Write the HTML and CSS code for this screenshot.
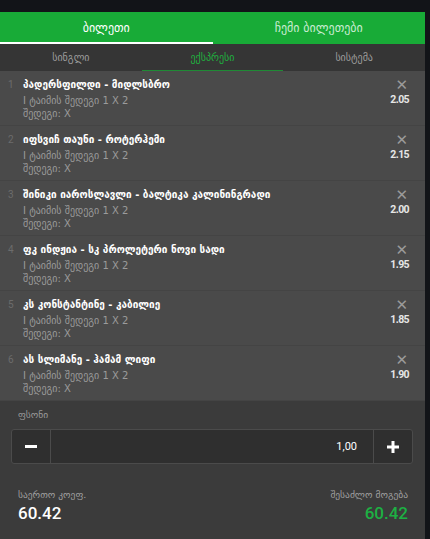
FILE: index.html
```html
<!DOCTYPE html>
<html lang="ka">
<head>
<meta charset="utf-8">
<link rel="stylesheet" href="styles.css">
</head>
<body>
<div class="top"></div>
<div class="wrap">
  <div class="panel">
    <div class="tabs">
      <div class="tab active">ბილეთი</div>
      <div class="tab">ჩემი ბილეთები</div>
    </div>
    <div class="subtabs">
      <div class="sub">სინგლი</div>
      <div class="sub active">ექსპრესი</div>
      <div class="sub">სისტემა</div>
    </div>
    <div class="rows">
      <div class="row">
        <div class="num">1</div>
        <div class="info">
          <div class="title">პადერსფილდი - მიდლსბრო</div>
          <div class="meta">I ტაიმის შედეგი 1 X 2</div>
          <div class="meta">შედეგი: X</div>
        </div>
        <div class="side"><span class="x">✕</span><span class="odd">2.05</span></div>
      </div>
      <div class="row">
        <div class="num">2</div>
        <div class="info">
          <div class="title">იფსვიჩ თაუნი - როტერჰემი</div>
          <div class="meta">I ტაიმის შედეგი 1 X 2</div>
          <div class="meta">შედეგი: X</div>
        </div>
        <div class="side"><span class="x">✕</span><span class="odd">2.15</span></div>
      </div>
      <div class="row">
        <div class="num">3</div>
        <div class="info">
          <div class="title">შინიკი იაროსლავლი - ბალტიკა კალინინგრადი</div>
          <div class="meta">I ტაიმის შედეგი 1 X 2</div>
          <div class="meta">შედეგი: X</div>
        </div>
        <div class="side"><span class="x">✕</span><span class="odd">2.00</span></div>
      </div>
      <div class="row">
        <div class="num">4</div>
        <div class="info">
          <div class="title">ფკ ინდჟია - სკ პროლეტერი ნოვი სადი</div>
          <div class="meta">I ტაიმის შედეგი 1 X 2</div>
          <div class="meta">შედეგი: X</div>
        </div>
        <div class="side"><span class="x">✕</span><span class="odd">1.95</span></div>
      </div>
      <div class="row">
        <div class="num">5</div>
        <div class="info">
          <div class="title">კს კონსტანტინე - კაბილიე</div>
          <div class="meta">I ტაიმის შედეგი 1 X 2</div>
          <div class="meta">შედეგი: X</div>
        </div>
        <div class="side"><span class="x">✕</span><span class="odd">1.85</span></div>
      </div>
      <div class="row">
        <div class="num">6</div>
        <div class="info">
          <div class="title">ას სლიმანე - ჰამამ ლიფი</div>
          <div class="meta">I ტაიმის შედეგი 1 X 2</div>
          <div class="meta">შედეგი: X</div>
        </div>
        <div class="side"><span class="x">✕</span><span class="odd">1.90</span></div>
      </div>
    </div>
    <div class="stake">
      <div class="label">ფსონი</div>
      <div class="input">
        <div class="btn"><svg width="12" height="4" viewBox="0 0 12 4"><rect width="12" height="3" fill="#fff"/></svg></div>
        <div class="val">1,00</div>
        <div class="btn"><svg width="12" height="12" viewBox="0 0 12 12"><rect x="4.5" width="3" height="12" fill="#fff"/><rect y="4.5" width="12" height="3" fill="#fff"/></svg></div>
      </div>
      <div class="totals">
        <div class="tot">
          <div class="tlabel">საერთო კოეფ.</div>
          <div class="tval">60.42</div>
        </div>
        <div class="tot right">
          <div class="tlabel">შესაძლო მოგება</div>
          <div class="tval green">60.42</div>
        </div>
      </div>
    </div>
  </div>
</div>
</body>
</html>
```
FILE: styles.css
```css
* { box-sizing: border-box; }
html, body { margin: 0; padding: 0; }
body {
  background: #121418;
  width: 430px;
  height: 539px;
  overflow: hidden;
  font-family: "Roboto", "DejaVu Sans", sans-serif;
}
.top { height: 12px; }
.wrap { padding-right: 5px; }
.panel { background: #3b3b3b; height: 527px; }
.tabs {
  display: flex;
  background: #18ab37;
  height: 32px;
}
.tab {
  flex: 1;
  display: flex;
  align-items: center;
  justify-content: center;
  color: #c9ecd2;
  font-size: 12px;
  font-family: "DejaVu Sans", sans-serif;
  border-bottom: 2px solid transparent;
  padding-top: 2px;
}
.tab.active { color: #fff; border-bottom-color: #fff; }
.subtabs {
  display: flex;
  background: #353535;
  height: 27px;
}
.sub {
  flex: 1;
  display: flex;
  align-items: center;
  justify-content: center;
  color: #9d9d9d;
  font-size: 10px;
  font-family: "DejaVu Sans", sans-serif;
  border-bottom: 1px solid transparent;
}
.sub.active { color: #20b03f; border-bottom-color: #1f8a35; }
.rows { background: #4a4a4a; }
.row {
  display: flex;
  height: 55px;
  border-bottom: 1px solid #444;
  padding: 7px 16px 0 8px;
}
.num {
  width: 15px;
  color: #6c6c6c;
  font-size: 10px;
  padding-top: 1px;
}
.info { flex: 1; }
.title {
  color: #fff;
  font-size: 10px;
  font-weight: bold;
  font-family: "DejaVu Sans", sans-serif;
  height: 16px;
  padding-top: 1px;
}
.meta {
  color: #9b9b9b;
  font-size: 10px;
  font-family: "DejaVu Sans", sans-serif;
  line-height: 13px;
}
.side {
  display: flex;
  flex-direction: column;
  align-items: flex-end;
}
.x {
  color: #9a9a9a;
  font-size: 15px;
  line-height: 14px;
  margin-right: 1px;
}
.odd {
  color: #e6e6e6;
  font-size: 10.5px;
  font-weight: bold;
  letter-spacing: -0.6px;
  margin-top: 1px;
}
.stake { padding: 8px 12px 0 11px; }
.label {
  color: #9a9a9a;
  font-size: 9.5px;
  font-family: "DejaVu Sans", sans-serif;
  height: 20px;
  padding-left: 7px;
}
.input {
  display: flex;
  height: 35px;
  border: 1px solid #4b4b4b;
  border-radius: 3px;
  background: #2f2f2f;
}
.btn {
  width: 38px;
  display: flex;
  align-items: center;
  justify-content: center;
}
.val {
  flex: 1;
  border-left: 1px solid #4b4b4b;
  border-right: 1px solid #4b4b4b;
  color: #fff;
  font-size: 11px;
  display: flex;
  align-items: center;
  justify-content: flex-end;
  padding-right: 16px;
}
.totals {
  display: flex;
  justify-content: space-between;
  margin-top: 25px;
  padding: 0 5px 0 7px;
}
.tlabel {
  color: #a0a0a0;
  font-size: 9.5px;
  font-family: "DejaVu Sans", sans-serif;
  height: 14px;
}
.tval {
  color: #fff;
  font-size: 17px;
  font-weight: 500;
}
.tot.right { text-align: right; }
.tval.green { color: #1db043; }
```
